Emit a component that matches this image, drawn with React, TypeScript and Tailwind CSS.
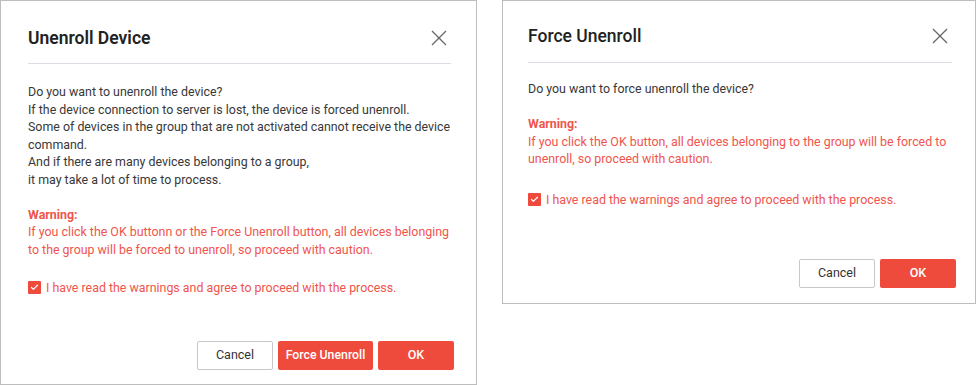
import { Check } from "lucide-react";

function CloseIcon() {
  return (
    <svg width="16" height="16" viewBox="0 0 16 16" className="mr-[4px] text-[#666]">
      <path d="M1 1L15 15M15 1L1 15" stroke="currentColor" strokeWidth="1.3" fill="none" />
    </svg>
  );
}

function Checkbox({ label }: { label: string }) {
  return (
    <label className="flex items-center gap-[5px] text-[12.4px] leading-[17.5px] text-[#f0554d]">
      <span className="flex h-[13px] w-[13px] items-center justify-center rounded-[1px] bg-[#ee4b3d]">
        <Check size={9} strokeWidth={3.2} className="text-white" />
      </span>
      {label}
    </label>
  );
}

function Footer({ force }: { force?: boolean }) {
  return (
    <div className="flex justify-end gap-[5px]">
      <button className="h-[29px] w-[76px] rounded-[2px] border border-[#c8c8c8] bg-white text-[12.5px] text-[#333]">
        Cancel
      </button>
      {force && (
        <button className="h-[29px] w-[95px] rounded-[2px] bg-[#ee4b3d] text-[12.3px] font-medium text-white">
          Force Unenroll
        </button>
      )}
      <button className="h-[29px] w-[76px] rounded-[2px] bg-[#ee4b3d] text-[12.5px] font-medium text-white">
        OK
      </button>
    </div>
  );
}

export default function App() {
  return (
    <div className="flex items-start gap-[25px] bg-white" style={{ fontFamily: "Roboto, 'Liberation Sans', sans-serif" }}>
      {/* Unenroll Device */}
      <div className="flex h-[385px] w-[477px] flex-col border border-[#bdbdbd] pl-[27px] pr-[22px] pt-[25px]">
        <div className="mr-[3px] flex items-center justify-between border-b border-[#dcdce4] pb-[13px]">
          <h2 className="text-[17.5px] font-semibold leading-[24px] text-[#222]">Unenroll Device</h2>
          <CloseIcon />
        </div>
        <div className="mr-[3px] pt-[19px] text-[12.4px] leading-[17.5px] text-[#383838]">
          <p>Do you want to unenroll the device?</p>
          <p>If the device connection to server is lost, the device is forced unenroll.</p>
          <p>Some of devices in the group that are not activated cannot receive the device command.</p>
          <p>And if there are many devices belonging to a group,</p>
          <p>it may take a lot of time to process.</p>
          <div className="mt-[17.5px] text-[#f0554d]">
            <p className="font-bold">Warning:</p>
            <p>
              If you click the OK buttonn or the Force Unenroll button, all devices belonging to the group will be
              forced to unenroll, so proceed with caution.
            </p>
          </div>
        </div>
        <div className="mt-[21px]">
          <Checkbox label="I have read the warnings and agree to proceed with the process." />
        </div>
        <div className="mt-[44px]">
          <Footer force />
        </div>
      </div>

      {/* Force Unenroll */}
      <div className="flex h-[304px] w-[474px] flex-col border border-[#bdbdbd] pl-[25px] pr-[19px] pt-[23px]">
        <div className="mr-[4px] flex items-center justify-between border-b border-[#dcdce4] pb-[14px]">
          <h2 className="text-[17.5px] font-medium leading-[24px] text-[#222]">Force Unenroll</h2>
          <CloseIcon />
        </div>
        <div className="mr-[4px] pt-[17px] text-[12.4px] leading-[17.5px] text-[#383838]">
          <p>Do you want to force unenroll the device?</p>
          <div className="mt-[17.5px] text-[#f0554d]">
            <p className="font-bold">Warning:</p>
            <p>
              If you click the OK button, all devices belonging to the group will be forced to unenroll, so proceed
              with caution.
            </p>
          </div>
        </div>
        <div className="mt-[23px]">
          <Checkbox label="I have read the warnings and agree to proceed with the process." />
        </div>
        <div className="mt-[51px]">
          <Footer />
        </div>
      </div>
    </div>
  );
}
